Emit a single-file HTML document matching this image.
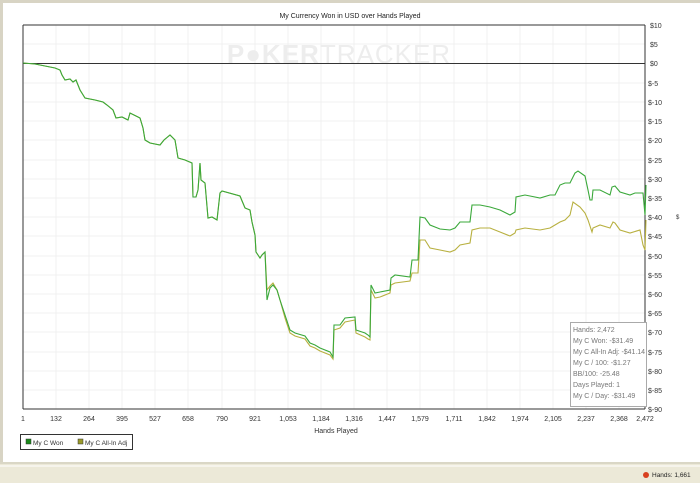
<!DOCTYPE html>
<html><head><style>
body{margin:0;width:700px;height:483px;background:#fff;font-family:"Liberation Sans",sans-serif;overflow:hidden;position:relative}
</style></head><body>
<svg width="700" height="483" style="position:absolute;left:0;top:0" font-family="Liberation Sans, sans-serif">
<rect x="0" y="0" width="700" height="483" fill="#fff"/>
<rect x="0" y="0" width="700" height="3" fill="#d8d4c4"/>
<rect x="0" y="0" width="3" height="464" fill="#d8d4c4"/>
<rect x="0" y="462" width="700" height="21" fill="#ece9d8"/>
<line x1="0" y1="463" x2="700" y2="463" stroke="#c9c5b3"/>
<line x1="0" y1="466" x2="700" y2="466" stroke="#fff"/>
<text x="350" y="18" font-size="7" text-anchor="middle" fill="#222">My Currency Won in USD over Hands Played</text>
<g stroke="#f1f1f1" stroke-width="1">
<line x1="23" y1="44" x2="645" y2="44"/><line x1="23" y1="83" x2="645" y2="83"/><line x1="23" y1="102" x2="645" y2="102"/><line x1="23" y1="121" x2="645" y2="121"/><line x1="23" y1="140" x2="645" y2="140"/><line x1="23" y1="160" x2="645" y2="160"/><line x1="23" y1="179" x2="645" y2="179"/><line x1="23" y1="198" x2="645" y2="198"/><line x1="23" y1="217" x2="645" y2="217"/><line x1="23" y1="236" x2="645" y2="236"/><line x1="23" y1="256" x2="645" y2="256"/><line x1="23" y1="275" x2="645" y2="275"/><line x1="23" y1="294" x2="645" y2="294"/><line x1="23" y1="313" x2="645" y2="313"/><line x1="23" y1="332" x2="645" y2="332"/><line x1="23" y1="352" x2="645" y2="352"/><line x1="23" y1="371" x2="645" y2="371"/><line x1="23" y1="390" x2="645" y2="390"/>
<line x1="56" y1="25" x2="56" y2="409"/><line x1="89" y1="25" x2="89" y2="409"/><line x1="122" y1="25" x2="122" y2="409"/><line x1="155" y1="25" x2="155" y2="409"/><line x1="188" y1="25" x2="188" y2="409"/><line x1="222" y1="25" x2="222" y2="409"/><line x1="255" y1="25" x2="255" y2="409"/><line x1="288" y1="25" x2="288" y2="409"/><line x1="321" y1="25" x2="321" y2="409"/><line x1="354" y1="25" x2="354" y2="409"/><line x1="387" y1="25" x2="387" y2="409"/><line x1="420" y1="25" x2="420" y2="409"/><line x1="454" y1="25" x2="454" y2="409"/><line x1="487" y1="25" x2="487" y2="409"/><line x1="520" y1="25" x2="520" y2="409"/><line x1="553" y1="25" x2="553" y2="409"/><line x1="586" y1="25" x2="586" y2="409"/><line x1="619" y1="25" x2="619" y2="409"/>
</g>
<text x="339" y="63" font-size="26" font-weight="bold" fill="#ededed" text-anchor="middle" letter-spacing="1">P●KER<tspan font-weight="normal">TRACKER</tspan></text>
<line x1="23" y1="25" x2="645" y2="25" stroke="#333"/>
<line x1="23" y1="25" x2="23" y2="409" stroke="#333"/>
<line x1="645" y1="25" x2="645" y2="409" stroke="#333"/>
<line x1="23" y1="409" x2="645" y2="409" stroke="#333"/>
<line x1="23" y1="63.5" x2="645" y2="63.5" stroke="#333"/>
<polyline fill="none" stroke="#b8b040" stroke-width="1.1" points="23,63 35,64 45,66 55,68 60,70 62,75 65,80 70,79 73,82 76,80 80,90 85,98 95,100 103,102 107,105 113,110 116,118 122,117 128,120 130,113 136,116 140,118 143,128 145,140 150,143 160,145 164,140 170,135 175,140 178,158 185,160 192,163 193,197 196,197 198,190 200,163 201,180 205,183 208,218 212,217 217,220 220,193 222,191 240,196 245,208 250,210 252,222 255,235 256,252 258,255 260,258 262,255 265,252 267,290 270,286 273,283 277,290 280,300 285,318 290,333 295,336 305,339 310,346 315,348 320,351 330,355 333,359 334,330 340,328 345,322 355,320 356,333 365,337 368,339 370,340 371,290 375,298 380,297 390,293 391,285 395,283 410,281 412,273 418,273 420,240 425,240 430,248 440,250 450,252 455,250 460,245 470,243 472,230 480,228 490,228 500,232 510,236 515,233 516,230 525,228 540,230 550,228 555,225 560,222 565,220 570,215 573,202 580,207 585,213 588,220 592,232 593,228 600,225 610,228 613,222 615,223 620,230 630,233 640,230 643,245 645,250 646,220"/>
<polyline fill="none" stroke="#3aa83a" stroke-width="1.1" points="23,63 35,64 45,66 55,68 60,70 62,75 65,80 70,79 73,82 76,80 80,90 85,98 95,100 103,102 107,105 113,110 116,118 122,117 128,120 130,113 136,116 140,118 143,128 145,140 150,143 160,145 164,140 170,135 175,140 178,158 185,160 192,163 193,197 196,197 198,190 200,163 201,180 205,183 208,218 212,217 217,220 220,193 222,191 240,196 245,208 250,210 252,222 255,235 256,252 258,255 260,258 262,255 265,252 267,300 270,288 273,285 277,290 280,300 285,315 290,330 295,333 305,336 310,343 315,345 320,348 330,352 333,357 334,325 340,325 345,318 355,317 356,330 365,333 368,335 370,337 371,285 375,293 380,292 390,290 391,278 395,275 410,277 412,260 418,260 420,217 425,218 430,225 440,229 450,230 455,228 460,222 470,222 472,205 480,205 490,207 500,210 510,215 515,212 516,197 525,195 535,197 540,198 550,195 555,195 560,185 565,183 570,183 575,173 578,171 585,176 588,190 590,200 592,200 593,190 600,190 610,195 612,187 615,186 620,192 630,195 635,193 643,193 645,215 646,185"/>
<g font-size="7" fill="#333">
<text x="650" y="28">$10</text><text x="650" y="47">$5</text><text x="650" y="66">$0</text>
<text x="648" y="86">$-5</text><text x="648" y="105">$-10</text><text x="648" y="124">$-15</text><text x="648" y="143">$-20</text><text x="648" y="163">$-25</text><text x="648" y="182">$-30</text><text x="648" y="201">$-35</text><text x="648" y="220">$-40</text><text x="648" y="239">$-45</text><text x="648" y="259">$-50</text><text x="648" y="278">$-55</text><text x="648" y="297">$-60</text><text x="648" y="316">$-65</text><text x="648" y="335">$-70</text><text x="648" y="355">$-75</text><text x="648" y="374">$-80</text><text x="648" y="393">$-85</text><text x="648" y="412">$-90</text>
<text x="676" y="219" font-size="6">$</text>
</g>
<g font-size="7" fill="#333" text-anchor="middle">
<text x="23" y="421">1</text><text x="56" y="421">132</text><text x="89" y="421">264</text><text x="122" y="421">395</text><text x="155" y="421">527</text><text x="188" y="421">658</text><text x="222" y="421">790</text><text x="255" y="421">921</text><text x="288" y="421">1,053</text><text x="321" y="421">1,184</text><text x="354" y="421">1,316</text><text x="387" y="421">1,447</text><text x="420" y="421">1,579</text><text x="454" y="421">1,711</text><text x="487" y="421">1,842</text><text x="520" y="421">1,974</text><text x="553" y="421">2,105</text><text x="586" y="421">2,237</text><text x="619" y="421">2,368</text><text x="645" y="421">2,472</text>
<text x="336" y="433">Hands Played</text>
</g>
<rect x="570.5" y="322.5" width="76" height="84" fill="#fff" stroke="#aaa"/>
<g font-size="7" fill="#777">
<text x="573" y="332">Hands: 2,472</text><text x="573" y="343">My C Won: -$31.49</text><text x="573" y="354" textLength="72">My C All-In Adj: -$41.14</text><text x="573" y="365">My C / 100: -$1.27</text><text x="573" y="376">BB/100: -25.48</text><text x="573" y="387">Days Played: 1</text><text x="573" y="398">My C / Day: -$31.49</text>
</g>
<rect x="20.5" y="434.5" width="112" height="15" fill="#fff" stroke="#333"/>
<rect x="26" y="439" width="5" height="5" fill="#1a8a1a" stroke="#333" stroke-width=".5"/>
<text x="33" y="445" font-size="6.5" fill="#333">My C Won</text>
<rect x="78" y="439" width="5" height="5" fill="#9a9a2a" stroke="#333" stroke-width=".5"/>
<text x="85" y="445" font-size="6.5" fill="#333">My C All-In Adj</text>
<circle cx="646" cy="475" r="3" fill="#d84020"/>
<text x="652" y="477" font-size="6.5" fill="#222">Hands: 1,661</text>
</svg>
</body></html>
